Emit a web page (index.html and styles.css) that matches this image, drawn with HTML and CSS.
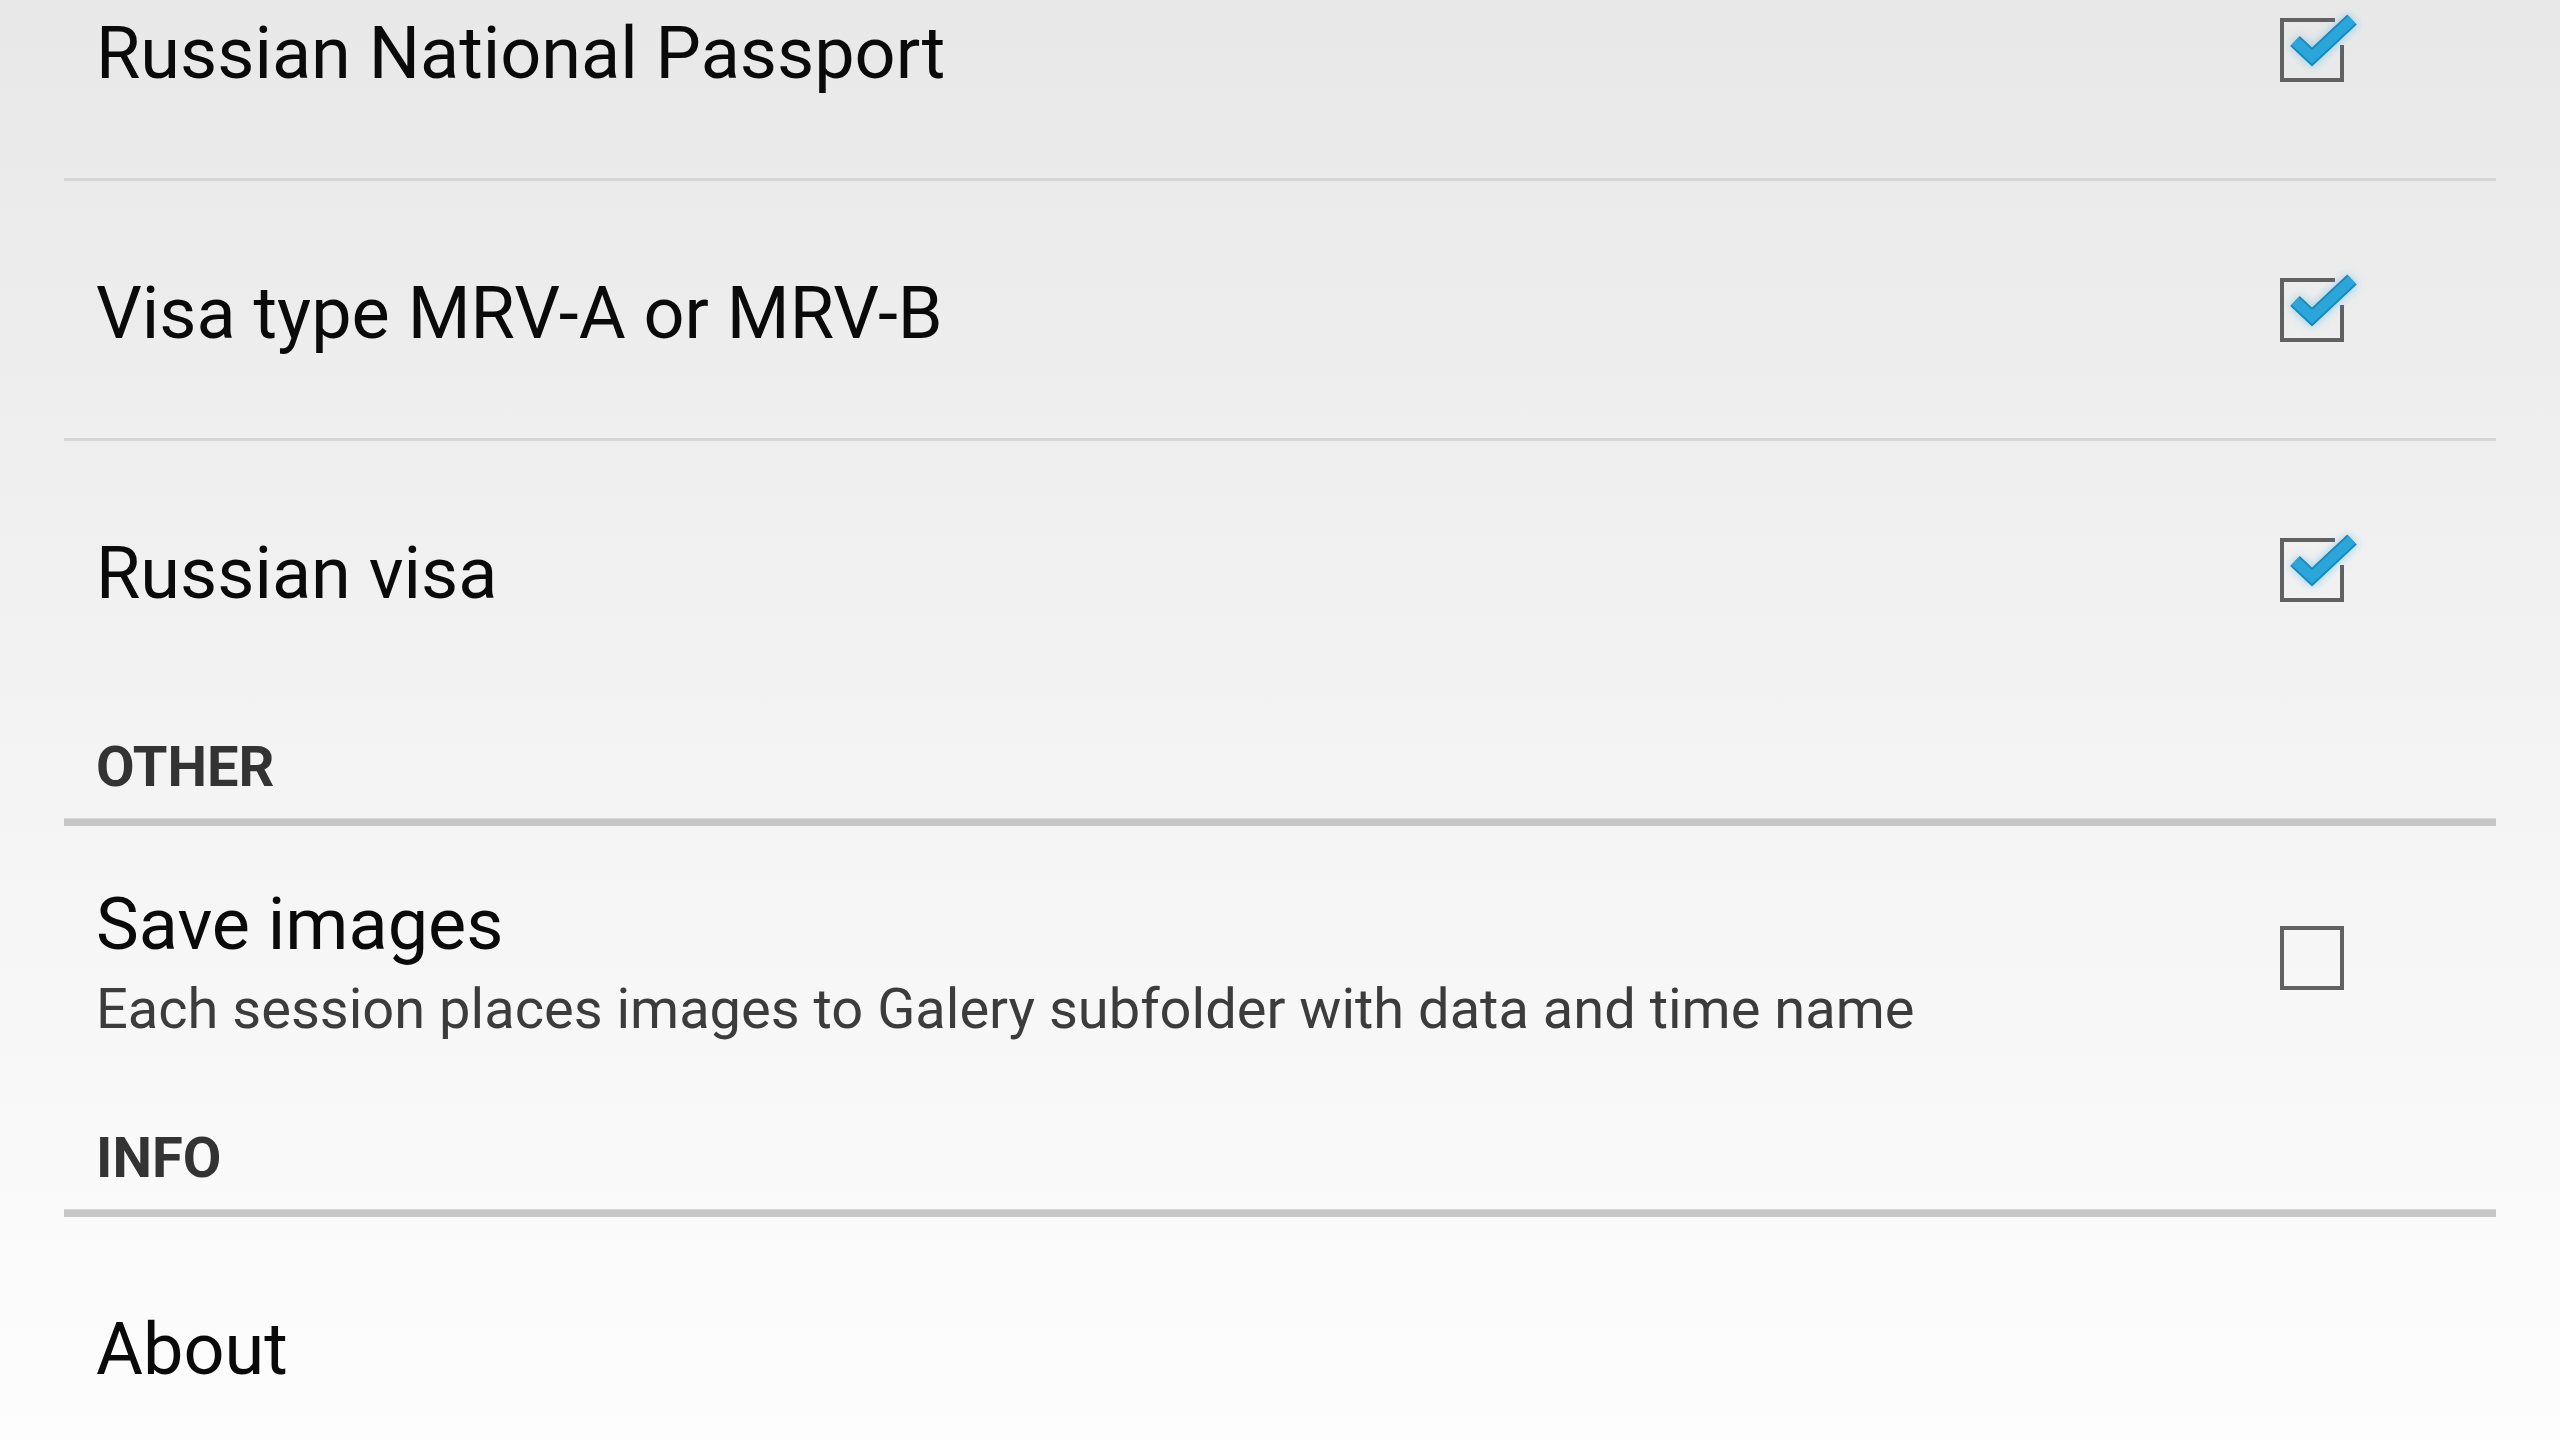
FILE: index.html
```html
<!DOCTYPE html>
<html lang="en">
<head>
<meta charset="utf-8">
<title>Settings</title>
<link rel="stylesheet" href="styles.css">
</head>
<body>
<div class="screen">
  <div class="list">
    <div class="row">
      <div class="row-text"><div class="title">Russian National Passport</div></div>
      <svg class="cb" viewBox="0 0 96 96" width="96" height="96"><path class="cb-box" d="M55 18 H2 V78 H62 V43"/><g class="cb-check"><polyline class="ck-out" points="15,39 32,55 72,17.5"/><polyline class="ck-in" points="15,39 32,55 72,17.5"/></g></svg>
    </div>
    <div class="divider"></div>
    <div class="row">
      <div class="row-text"><div class="title">Visa type MRV-A or MRV-B</div></div>
      <svg class="cb" viewBox="0 0 96 96" width="96" height="96"><path class="cb-box" d="M55 18 H2 V78 H62 V43"/><g class="cb-check"><polyline class="ck-out" points="15,39 32,55 72,17.5"/><polyline class="ck-in" points="15,39 32,55 72,17.5"/></g></svg>
    </div>
    <div class="divider"></div>
    <div class="row">
      <div class="row-text"><div class="title">Russian visa</div></div>
      <svg class="cb" viewBox="0 0 96 96" width="96" height="96"><path class="cb-box" d="M55 18 H2 V78 H62 V43"/><g class="cb-check"><polyline class="ck-out" points="15,39 32,55 72,17.5"/><polyline class="ck-in" points="15,39 32,55 72,17.5"/></g></svg>
    </div>
    <div class="category category-first"><span>OTHER</span></div>
    <div class="cat-divider"></div>
    <div class="row row-two">
      <div class="row-text two-line">
        <div class="title title-2">Save images</div>
        <div class="summary">Each session places images to Galery subfolder with data and time name</div>
      </div>
      <svg class="cb cb-raised" viewBox="0 0 96 96" width="96" height="96"><rect class="cb-box" x="2" y="18" width="60" height="60"/></svg>
    </div>
    <div class="category category-second"><span>INFO</span></div>
    <div class="cat-divider"></div>
    <div class="row">
      <div class="row-text"><div class="title">About</div></div>
    </div>
  </div>
</div>
</body>
</html>
```

FILE: styles.css
```css
html, body {
  margin: 0;
  padding: 0;
}

body {
  width: 2560px;
  height: 1440px;
  overflow: hidden;
  background: linear-gradient(to bottom, #e8e8e8 0%, #f3f3f3 50%, #fdfdfd 100%);
  font-family: Roboto, "Noto Sans", "Liberation Sans", sans-serif;
}

.screen {
  height: 1440px;
  padding: 0 64px;
  box-sizing: border-box;
}

.list {
  margin-top: -79px;
  display: flex;
  flex-direction: column;
}

.row {
  height: 257px;
  display: flex;
  align-items: center;
  padding: 0 120px 0 32px;
  box-sizing: border-box;
}

.row-text {
  flex: 1;
  padding-top: 8px;
}

.title {
  font-size: 72px;
  line-height: 72px;
  color: #0a0a0a;
  white-space: nowrap;
}

.row-two {
  height: 272px;
}

.two-line {
  padding-top: 9px;
}

.title-2 {
  font-size: 72px;
  line-height: 80px;
}

.summary {
  margin-top: 4px;
  font-size: 56px;
  line-height: 80px;
  color: #3c3c3c;
  white-space: nowrap;
}

.divider {
  height: 3px;
  background: #d5d5d5;
}

.cat-divider {
  height: 8px;
  box-sizing: border-box;
  border-top: 1px solid #d6d6d6;
  background: #c6c6c6;
}

.category {
  display: flex;
  align-items: flex-end;
  padding: 0 32px 23px 32px;
  box-sizing: border-box;
}

.category span {
  font-size: 56px;
  line-height: 56px;
  font-weight: 700;
  color: #333333;
}

.category-first {
  height: 120px;
}

.category-second {
  height: 111px;
}

.cb {
  flex: none;
  width: 96px;
  height: 96px;
  overflow: visible;
}

.cb-raised {
  margin-bottom: 9px;
}

.cb-box {
  fill: none;
  stroke: #616161;
  stroke-width: 4;
}

.cb-check {
  filter: drop-shadow(0 0 5px rgba(70, 180, 235, 0.55));
}

.ck-out {
  fill: none;
  stroke: #1a88bb;
  stroke-width: 14;
  stroke-linejoin: miter;
  stroke-linecap: butt;
}

.ck-in {
  fill: none;
  stroke: #2aa6db;
  stroke-width: 10;
  stroke-linejoin: miter;
  stroke-linecap: butt;
}
```
